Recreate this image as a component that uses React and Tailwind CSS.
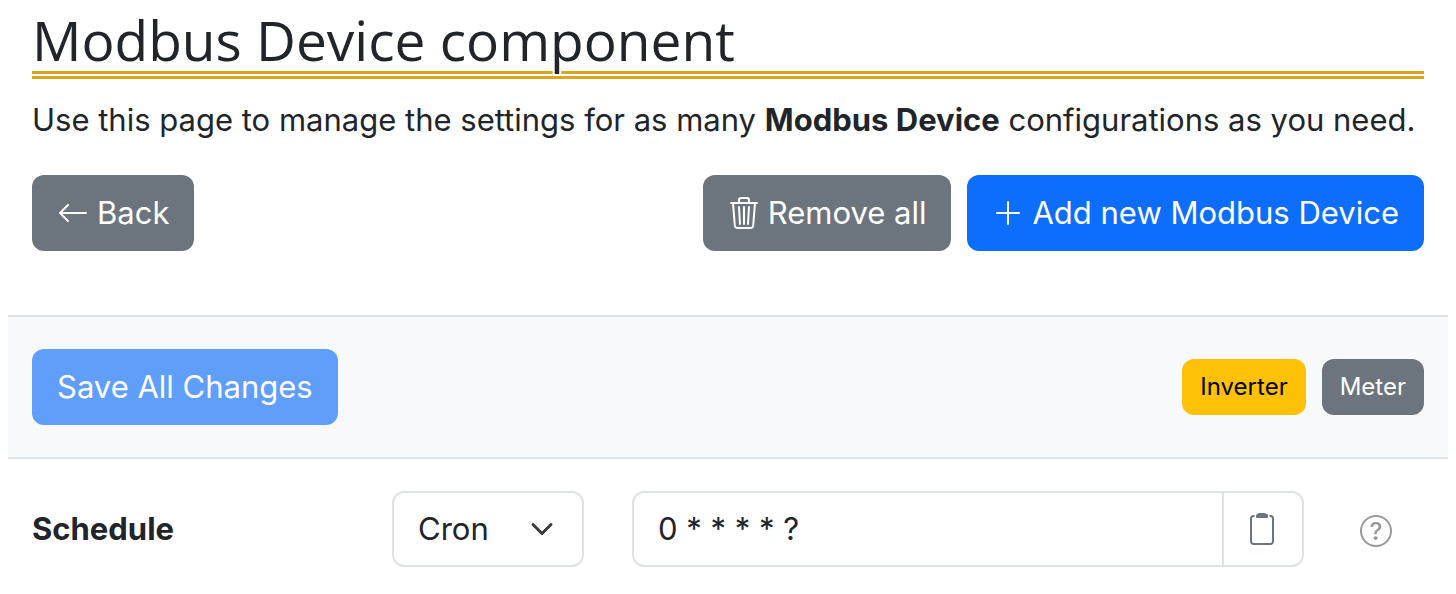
import { BsArrowLeft, BsTrash3, BsPlusLg, BsQuestionCircle } from "react-icons/bs";

const button = "flex h-[76px] items-center gap-2 rounded-xl px-[25px] text-[31px] leading-[48px] whitespace-nowrap text-white";
const badge = "flex h-14 items-center rounded-xl px-[18px] text-[24px] leading-9";

function ChevronIcon({ className }) {
  return (
    <svg viewBox="0 0 16 16" fill="none" stroke="currentColor" strokeWidth="2" strokeLinecap="round" strokeLinejoin="round" className={className} aria-hidden="true">
      <path d="m2 5 6 6 6-6" />
    </svg>
  );
}

function ClipboardIcon({ className }) {
  return (
    <svg viewBox="0 0 24 32" fill="none" className={className} aria-hidden="true">
      <path d="M4.500 3H3.500A2.500 2.500 0 0 0 1 5.500V28.500A2.500 2.500 0 0 0 3.500 31H20.500A2.500 2.500 0 0 0 23 28.500V5.500A2.500 2.500 0 0 0 20.500 3H19.500" stroke="currentColor" strokeWidth="2" />
      <path d="M9.500 0H14.500Q16 0 16.500 1H17Q18 1.200 18 3V4Q18 5 17 5H7Q6 5 6 4V3Q6 1.200 7.500 1Q8 0 9.500 0Z" fill="currentColor" />
    </svg>
  );
}

export default function App() {
  return (
    <div className="bg-white px-2 font-[Inter,'Liberation_Sans',sans-serif] text-[#212529]">
      <header className="px-6">
        <h1 className="border-b-8 border-double border-[#daa520] pt-2 font-['Open_Sans',sans-serif] text-[55px] leading-[63px] [text-shadow:-2px_0_white,2px_0_white]">
          Modbus Device component
        </h1>
        <p className="mt-[17px] text-[31px] leading-[48px]">
          Use this page to manage the settings for as many <strong className="font-bold">Modbus Device</strong> configurations as you need.
        </p>
        <div className="mt-[31px] flex gap-4">
          <button type="button" className={`${button} mr-auto bg-[#6c757d]`}>
            <BsArrowLeft className="size-8" /> Back
          </button>
          <button type="button" className={`${button} bg-[#6c757d]`}>
            <BsTrash3 className="size-8" /> Remove all
          </button>
          <button type="button" className={`${button} bg-[#0d6efd]`}>
            <BsPlusLg className="size-8" /> Add new Modbus Device
          </button>
        </div>
      </header>
      <section className="mt-16 flex items-center gap-4 border-y-2 border-[#dee2e6] bg-[#f8f9fa] px-6 py-8">
        <button type="button" disabled className={`${button} mr-auto bg-[#5f9efb]`}>
          Save All Changes
        </button>
        <button type="button" className={`${badge} bg-[#ffc107] text-black`}>Inverter</button>
        <button type="button" className={`${badge} bg-[#6c757d] text-white`}>Meter</button>
      </section>
      <form className="grid grid-cols-12 items-center py-8 text-[31px] leading-[48px]">
        <label htmlFor="schedule-value" className="col-span-3 px-6 font-bold">Schedule</label>
        <div className="col-span-2 px-6">
          <div className="grid items-center">
            <select
              aria-label="Schedule type"
              className="col-start-1 row-start-1 h-[76px] w-full appearance-none rounded-xl border-2 border-[#dee2e6] bg-white pl-6"
            >
              <option>Cron</option>
            </select>
            <ChevronIcon className="pointer-events-none col-start-1 row-start-1 mr-[30px] size-6 justify-self-end text-[#343a40]" />
          </div>
        </div>
        <div className="col-span-6 px-6">
          <div className="flex h-[76px] rounded-xl border-2 border-[#dee2e6]">
            <input id="schedule-value" defaultValue="0 * * * * ?" className="min-w-0 flex-1 rounded-l-xl px-6" />
            <button
              type="button"
              aria-label="Copy schedule"
              className="flex w-20 items-center border-l-2 border-[#dee2e6] pl-[26px] text-[#6c757d]"
            >
              <ClipboardIcon className="h-8 w-6" />
            </button>
          </div>
        </div>
        <div className="pt-1 pl-8">
          <button type="button" aria-label="Schedule help" className="block text-[#999999]">
            <BsQuestionCircle className="size-8" />
          </button>
        </div>
      </form>
    </div>
  );
}
